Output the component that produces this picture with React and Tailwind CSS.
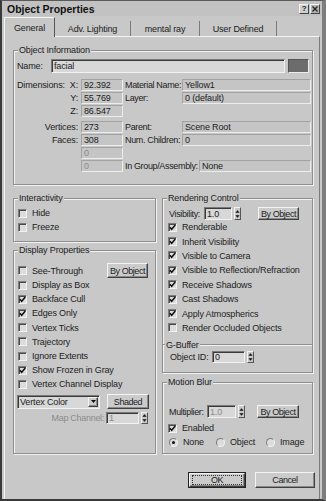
import React from "react";

const Check = ({ on }) => (
  <span className="flex h-[9px] w-[9px] shrink-0 items-center justify-center border border-t-[#7c7c7c] border-l-[#7c7c7c] border-r-[#f2f2f2] border-b-[#f2f2f2] bg-[#dcdcdc] shadow-[inset_1px_1px_0_#4a4a4a]">
    {on && (
      <svg width="7" height="7" viewBox="0 0 7 7">
        <path d="M0.9 3.3 L2.7 5.3 L6.3 1.1" fill="none" stroke="#111" strokeWidth="1.5" />
      </svg>
    )}
  </span>
);

const CheckRow = ({ on, label, className = "" }) => (
  <div className={`flex items-center gap-[5px] ${className}`}>
    <Check on={on} />
    <span>{label}</span>
  </div>
);

const Radio = ({ on }) => (
  <span className="flex h-[9px] w-[9px] shrink-0 items-center justify-center rounded-full border border-t-[#7c7c7c] border-l-[#7c7c7c] border-r-[#f2f2f2] border-b-[#f2f2f2] bg-[#dcdcdc]">
    {on && <span className="h-[3px] w-[3px] rounded-full bg-[#111]" />}
  </span>
);

const Spin = ({ className = "h-[12px]" }) => (
  <span className={`flex w-[7px] shrink-0 items-center justify-center border border-t-[#f2f2f2] border-l-[#f2f2f2] border-r-[#555] border-b-[#555] bg-[#c8c8c8] ${className}`}>
    <svg width="5" height="10" viewBox="0 0 5 10">
      <path d="M2.5 1.2 L4.6 3.8 L0.4 3.8Z M0.4 6.2 L4.6 6.2 L2.5 8.8Z" fill="#111" />
    </svg>
  </span>
);

const Edit = ({ className = "", dim, children }) => (
  <span
    className={`flex shrink-0 items-center border border-t-[#7a7a7a] border-l-[#7a7a7a] border-r-[#f2f2f2] border-b-[#f2f2f2] bg-[#d8d8d8] pl-[2px] shadow-[inset_1px_1px_0_#3a3a3a] ${
      dim ? "text-[#8a8a8a]" : ""
    } ${className}`}
  >
    {children}
  </span>
);

const Stat = ({ className = "", dim, children }) => (
  <span
    className={`flex h-[12px] shrink-0 items-center border border-t-[#a2a2a2] border-l-[#a2a2a2] border-r-[#ededed] border-b-[#ededed] bg-[#c5c5c5] pl-[2px] ${
      dim ? "text-[#8c8c8c]" : ""
    } ${className}`}
  >
    {children}
  </span>
);

const Btn = ({ className = "", children }) => (
  <span
    className={`flex shrink-0 items-center justify-center border border-t-[#f4f4f4] border-l-[#f4f4f4] border-r-[#404040] border-b-[#404040] bg-[#cbcbcb] tracking-[-0.45px] shadow-[inset_-1px_-1px_0_#8a8a8a] ${className}`}
  >
    {children}
  </span>
);

const Group = ({ title, className = "", children }) => (
  <div className={`relative border border-[#8e8e8e] shadow-[1px_1px_0_#f2f2f2,inset_1px_1px_0_#f2f2f2] ${className}`}>
    <span className="absolute -top-[6px] left-[4px] bg-[#c8c8c8] px-[1px] leading-[10px]">{title}</span>
    {children}
  </div>
);

const Etch = ({ className = "" }) => (
  <span className={`h-[2px] border-t border-t-[#8e8e8e] border-b border-b-[#f2f2f2] ${className}`} />
);

const infoRows = [
  { l: "Dimensions:", a: "X:", v: "92.392", m: "Material Name:", r: "Yellow1" },
  { a: "Y:", v: "55.769", m: "Layer:", r: "0 (default)" },
  { a: "Z:", v: "86.547" },
];

const countRows = [
  { a: "Vertices:", v: "273", m: "Parent:", r: "Scene Root" },
  { a: "Faces:", v: "308", m: "Num. Children:", r: "0" },
  { v: "0", dim: true },
  { v: "0", dim: true, m: "In Group/Assembly:", r: "None", wide: true },
];

const displayRows = [
  ["Display as Box", false],
  ["Backface Cull", true],
  ["Edges Only", true],
  ["Vertex Ticks", false],
  ["Trajectory", false],
  ["Ignore Extents", false],
  ["Show Frozen in Gray", true],
  ["Vertex Channel Display", false],
];

const renderRows = [
  ["Renderable", true],
  ["Inherit Visibility", true],
  ["Visible to Camera", true],
  ["Visible to Reflection/Refraction", true],
  ["Receive Shadows", true],
  ["Cast Shadows", true],
  ["Apply Atmospherics", true],
  ["Render Occluded Objects", false],
];

function InfoRow({ row }) {
  return (
    <div className="flex h-[12px] items-center">
      <span className="flex w-[61px] shrink-0 justify-between">
        <span>{row.l || ""}</span>
        <span>{row.a || ""}</span>
      </span>
      <Stat className="ml-[3px] w-[42px]" dim={row.dim}>
        {row.v}
      </Stat>
      {row.m && (
        <>
          <span className={`ml-[2px] shrink-0 overflow-hidden tracking-[-0.35px] ${row.wide ? "w-[74px]" : "w-[57px]"}`}>{row.m}</span>
          <Stat className={row.wide ? "w-[112px]" : "w-[129px]"}>{row.r}</Stat>
        </>
      )}
    </div>
  );
}

export default function App() {
  return (
    <div className="flex h-[501px] w-[326px] flex-col overflow-hidden whitespace-nowrap border-t border-l-2 border-b-2 border-r-4 border-t-[#5a5a5a] border-l-[#3a3a3a] border-b-[#3a3a3a] border-r-[#7e7e7e] bg-[#c8c8c8] font-['Liberation_Sans',Arial,sans-serif] text-[9px] leading-[10px] tracking-[-0.15px] text-[#1c1c1c]">
      {/* title bar */}
      <div className="flex h-[15px] items-center justify-between bg-[#c2c2c2] pl-[5px] pr-[2px]">
        <span className="text-[10.5px] font-bold tracking-[0px] text-[#111]">Object Properties</span>
        <div className="flex gap-[1px]">
          <span className="flex h-[10px] w-[10px] items-center justify-center border border-t-[#f4f4f4] border-l-[#f4f4f4] border-r-[#444] border-b-[#444] bg-[#d0d0d0] text-[8px] font-bold leading-[8px]">
            ?
          </span>
          <span className="flex h-[10px] w-[10px] items-center justify-center border border-t-[#f4f4f4] border-l-[#f4f4f4] border-r-[#444] border-b-[#444] bg-[#b4b4b4]">
            <svg width="6" height="6" viewBox="0 0 6 6">
              <path d="M0.5 0.5 L5.5 5.5 M5.5 0.5 L0.5 5.5" stroke="#222" strokeWidth="1.3" />
            </svg>
          </span>
        </div>
      </div>

      {/* tabs */}
      <div className="flex h-[20px] items-end pl-[2px]">
        <span className="relative z-10 -mb-px flex h-[20px] w-[51px] items-center justify-center border-t border-l border-r border-t-[#f4f4f4] border-l-[#f4f4f4] border-r-[#555] bg-[#c8c8c8] pt-[1px]">
          General
        </span>
        <span className="flex h-[15px] w-[76px] items-center justify-center border-r border-r-[#7a7a7a]">Adv. Lighting</span>
        <span className="flex h-[15px] w-[69px] items-center justify-center border-r border-r-[#7a7a7a]">mental ray</span>
        <span className="flex h-[15px] w-[77px] items-center justify-center border-r border-r-[#7a7a7a]">User Defined</span>
      </div>

      {/* panel */}
      <div className="mx-[2px] flex flex-1 flex-col border-t border-l border-r border-t-[#f4f4f4] border-l-[#f4f4f4] border-r-[#7a7a7a]">
        <Group title="Object Information" className="ml-[8px] mt-[13px] w-[300px] pb-[12px] pl-[3px] pt-[8px]">
          <div className="flex h-[14px] items-center">
            <span className="w-[34px]">Name:</span>
            <Edit className="h-[14px] w-[234px]">facial</Edit>
            <span className="ml-[3px] h-[14px] w-[21px] border border-t-[#555] border-l-[#555] border-r-[#eee] border-b-[#eee] bg-[#6c6c6c]" />
          </div>
          <div className="mt-[6px] flex flex-col gap-[1px]">
            {infoRows.map((row) => (
              <InfoRow key={row.a} row={row} />
            ))}
          </div>
          <div className="mt-[4px] flex flex-col gap-[1px]">
            {countRows.map((row, i) => (
              <InfoRow key={i} row={row} />
            ))}
          </div>
        </Group>

        <div className="ml-[8px] mt-[13px] flex h-[256px] gap-[6px]">
          {/* left column */}
          <div className="flex w-[143px] flex-col">
            <Group title="Interactivity" className="pb-[7px] pl-[4px] pt-[7px]">
              <CheckRow label="Hide" className="h-[14px]" />
              <CheckRow label="Freeze" className="h-[14px]" />
            </Group>
            <Group title="Display Properties" className="mt-[8px] flex-1 pt-[12px]">
              <div className="flex h-[15px] items-center justify-between pl-[4px] pr-[7px]">
                <CheckRow label="See-Through" />
                <Btn className="h-[15px] w-[41px]">By Object</Btn>
              </div>
              {displayRows.map(([label, on]) => (
                <CheckRow key={label} label={label} on={on} className="h-[14.2px] pl-[4px]" />
              ))}
              <div className="mt-[3px] flex h-[14px] items-center pl-[3px]">
                <Edit className="h-[14px] w-[83px] justify-between pr-[1px]">
                  <span>Vertex Color</span>
                  <Btn className="h-[10px] w-[10px]">
                    <svg width="5" height="3" viewBox="0 0 5 3">
                      <path d="M0 0 L5 0 L2.5 3Z" fill="#111" />
                    </svg>
                  </Btn>
                </Edit>
                <Btn className="ml-[7px] h-[15px] w-[42px]">Shaded</Btn>
              </div>
              <div className="mt-[3px] flex h-[12px] items-center justify-end pr-[7px] text-[#8c8c8c]">
                <span className="mr-[2px] tracking-[-0.3px]">Map Channel:</span>
                <Edit dim className="h-[12px] w-[33px]">
                  1
                </Edit>
                <Spin className="ml-[2px] h-[12px]" />
              </div>
            </Group>
          </div>

          {/* right column */}
          <div className="flex w-[151px] flex-col">
            <Group title="Rendering Control" className="pb-[9px] pl-[5px] pt-[8px]">
              <div className="flex h-[13px] items-center">
                <span className="ml-[1px] w-[35px] tracking-[-0.35px]">Visibility:</span>
                <Edit className="h-[13px] w-[28px]">1.0</Edit>
                <Spin className="ml-[2px] h-[13px]" />
                <Btn className="ml-[17px] h-[13px] w-[41px]">By Object</Btn>
              </div>
              {renderRows.map(([label, on]) => (
                <CheckRow key={label} label={label} on={on} className="h-[14.4px]" />
              ))}
              <div className="-ml-[5px] mt-[5px] flex h-[10px] items-center">
                <Etch className="w-[2px]" />
                <span className="px-[1px]">G-Buffer</span>
                <Etch className="flex-1" />
              </div>
              <div className="mt-[1px] flex h-[12px] items-center">
                <span className="ml-[2px] w-[42px]">Object ID:</span>
                <Edit className="h-[12px] w-[33px]">0</Edit>
                <Spin className="ml-[2px] h-[12px]" />
              </div>
            </Group>
            <Group title="Motion Blur" className="mt-[9px] flex-1 pb-[4px] pl-[5px] pt-[22px]">
              <div className="flex h-[13px] items-center">
                <span className="ml-[1px] w-[38px] tracking-[-0.35px]">Multiplier:</span>
                <Edit dim className="h-[13px] w-[29px]">
                  1.0
                </Edit>
                <Spin className="ml-[2px] h-[13px]" />
                <Btn className="ml-[12px] h-[13px] w-[42px]">By Object</Btn>
              </div>
              <CheckRow label="Enabled" on className="mt-[3px] h-[14px]" />
              <div className="flex h-[14px] items-center">
                <span className="flex w-[47px] items-center gap-[5px] pl-[1px]">
                  <Radio on />
                  None
                </span>
                <span className="flex w-[50px] items-center gap-[5px] pl-[1px]">
                  <Radio />
                  Object
                </span>
                <span className="flex items-center gap-[5px] pl-[1px]">
                  <Radio />
                  Image
                </span>
              </div>
            </Group>
          </div>
        </div>

        <div className="mt-[18px] flex justify-end gap-[9px] pr-[4px]">
          <span className="flex h-[16px] w-[58px] border border-[#222]">
            <Btn className="h-full w-full">
              <span className="flex h-[10px] w-[50px] items-center justify-center border border-dotted border-[#333]">OK</span>
            </Btn>
          </span>
          <Btn className="h-[16px] w-[60px]">Cancel</Btn>
        </div>
      </div>
    </div>
  );
}
